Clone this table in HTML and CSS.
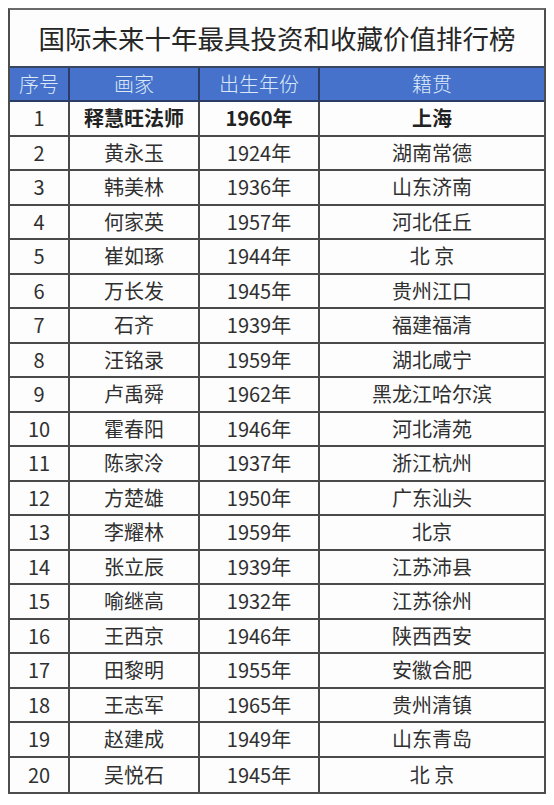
FILE: index.html
```html
<!DOCTYPE html>
<html lang="zh-CN">
<head>
<meta charset="utf-8">
<title>国际未来十年最具投资和收藏价值排行榜</title>
<link rel="stylesheet" href="styles.css">
</head>
<body>
<div class="sheet">
  <div class="title">国际未来十年最具投资和收藏价值排行榜</div>
  <div class="grid">
    <div class="cell head">序号</div><div class="cell head">画家</div><div class="cell head">出生年份</div><div class="cell head last-col">籍贯</div>
    <div class="cell">1</div><div class="cell bold">释慧旺法师</div><div class="cell bold">1960年</div><div class="cell bold last-col">上海</div>
    <div class="cell">2</div><div class="cell">黄永玉</div><div class="cell">1924年</div><div class="cell last-col">湖南常德</div>
    <div class="cell">3</div><div class="cell">韩美林</div><div class="cell">1936年</div><div class="cell last-col">山东济南</div>
    <div class="cell">4</div><div class="cell">何家英</div><div class="cell">1957年</div><div class="cell last-col">河北任丘</div>
    <div class="cell">5</div><div class="cell">崔如琢</div><div class="cell">1944年</div><div class="cell last-col">北 京</div>
    <div class="cell">6</div><div class="cell">万长发</div><div class="cell">1945年</div><div class="cell last-col">贵州江口</div>
    <div class="cell">7</div><div class="cell">石齐</div><div class="cell">1939年</div><div class="cell last-col">福建福清</div>
    <div class="cell">8</div><div class="cell">汪铭录</div><div class="cell">1959年</div><div class="cell last-col">湖北咸宁</div>
    <div class="cell">9</div><div class="cell">卢禹舜</div><div class="cell">1962年</div><div class="cell last-col">黑龙江哈尔滨</div>
    <div class="cell">10</div><div class="cell">霍春阳</div><div class="cell">1946年</div><div class="cell last-col">河北清苑</div>
    <div class="cell">11</div><div class="cell">陈家泠</div><div class="cell">1937年</div><div class="cell last-col">浙江杭州</div>
    <div class="cell">12</div><div class="cell">方楚雄</div><div class="cell">1950年</div><div class="cell last-col">广东汕头</div>
    <div class="cell">13</div><div class="cell">李耀林</div><div class="cell">1959年</div><div class="cell last-col">北京</div>
    <div class="cell">14</div><div class="cell">张立辰</div><div class="cell">1939年</div><div class="cell last-col">江苏沛县</div>
    <div class="cell">15</div><div class="cell">喻继高</div><div class="cell">1932年</div><div class="cell last-col">江苏徐州</div>
    <div class="cell">16</div><div class="cell">王西京</div><div class="cell">1946年</div><div class="cell last-col">陕西西安</div>
    <div class="cell">17</div><div class="cell">田黎明</div><div class="cell">1955年</div><div class="cell last-col">安徽合肥</div>
    <div class="cell">18</div><div class="cell">王志军</div><div class="cell">1965年</div><div class="cell last-col">贵州清镇</div>
    <div class="cell">19</div><div class="cell">赵建成</div><div class="cell">1949年</div><div class="cell last-col">山东青岛</div>
    <div class="cell last-row">20</div><div class="cell last-row">吴悦石</div><div class="cell last-row">1945年</div><div class="cell last-row last-col">北 京</div>
  </div>
</div>
</body>
</html>
```
FILE: styles.css
```css
html, body {
  margin: 0;
  padding: 0;
  background: #ffffff;
}
body {
  font-family: "Noto Sans CJK SC", "Noto Sans", sans-serif;
  color: #2e2e2e;
}
.sheet {
  margin: 8px 0 0 8px;
  width: 538px;
  box-sizing: border-box;
  border: 2px solid #4d4d4d;
  border-top-color: #6a6a6a;
  background: #fdfdfd;
}
.title {
  height: 58px;
  box-sizing: border-box;
  border-bottom: 2px solid #3a4660;
  display: flex;
  align-items: center;
  justify-content: center;
  font-size: 26.5px;
  color: #262626;
  white-space: nowrap;
  padding-bottom: 2px;
}
.grid {
  display: grid;
  grid-template-columns: 60px 130px 120px 1fr;
  grid-template-rows: 34px;
  grid-auto-rows: 34.5px;
}
.cell {
  box-sizing: border-box;
  border-right: 2px solid #4a4a4a;
  border-bottom: 2px solid #4a4a4a;
  display: flex;
  align-items: center;
  justify-content: center;
  font-size: 20px;
  line-height: 1;
  color: #303030;
}
.cell.last-col { border-right: none; }
.cell.last-row { border-bottom: none; }
.cell.head {
  background: #4672cb;
  color: #dbe8f7;
  font-weight: 300;
  border-right-color: #2b3d66;
  border-bottom-color: #2b3d66;
}
.cell.bold {
  font-weight: 700;
  color: #222;
}
```
